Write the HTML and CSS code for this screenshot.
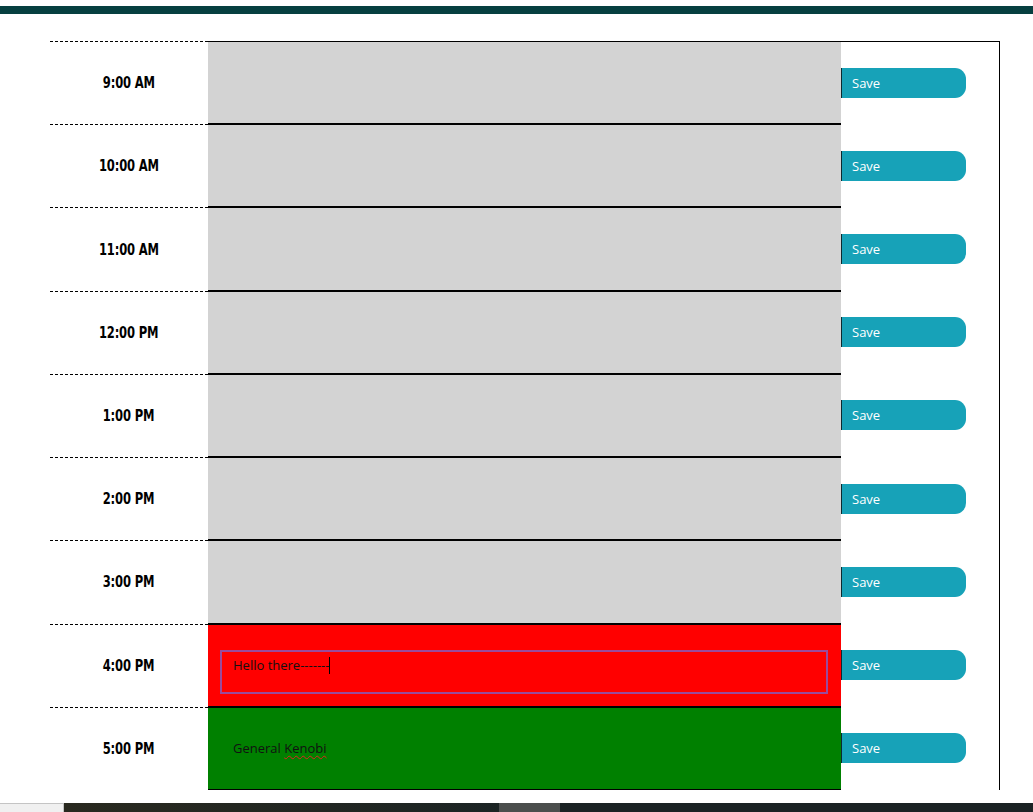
FILE: index.html
```html
<!DOCTYPE html>
<html lang="en">
<head>
<meta charset="utf-8">
<title>Work Day Scheduler</title>
<link rel="stylesheet" href="styles.css">
</head>
<body>
<div class="topbar"></div>
<main class="planner">
  <div class="time-block">
    <div class="hour"><span class="hour-label">9:00 AM</span></div>
    <div class="desc past"><div class="field"></div></div>
    <div class="save-cell"><button class="save-btn">Save</button></div>
  </div>
  <div class="time-block">
    <div class="hour"><span class="hour-label">10:00 AM</span></div>
    <div class="desc past"><div class="field"></div></div>
    <div class="save-cell"><button class="save-btn">Save</button></div>
  </div>
  <div class="time-block">
    <div class="hour"><span class="hour-label">11:00 AM</span></div>
    <div class="desc past"><div class="field"></div></div>
    <div class="save-cell"><button class="save-btn">Save</button></div>
  </div>
  <div class="time-block">
    <div class="hour"><span class="hour-label">12:00 PM</span></div>
    <div class="desc past"><div class="field"></div></div>
    <div class="save-cell"><button class="save-btn">Save</button></div>
  </div>
  <div class="time-block">
    <div class="hour"><span class="hour-label">1:00 PM</span></div>
    <div class="desc past"><div class="field"></div></div>
    <div class="save-cell"><button class="save-btn">Save</button></div>
  </div>
  <div class="time-block">
    <div class="hour"><span class="hour-label">2:00 PM</span></div>
    <div class="desc past"><div class="field"></div></div>
    <div class="save-cell"><button class="save-btn">Save</button></div>
  </div>
  <div class="time-block">
    <div class="hour"><span class="hour-label">3:00 PM</span></div>
    <div class="desc past"><div class="field"></div></div>
    <div class="save-cell"><button class="save-btn">Save</button></div>
  </div>
  <div class="time-block">
    <div class="hour"><span class="hour-label">4:00 PM</span></div>
    <div class="desc present"><div class="field focused">Hello there-------<span class="caret"></span></div></div>
    <div class="save-cell"><button class="save-btn">Save</button></div>
  </div>
  <div class="time-block">
    <div class="hour"><span class="hour-label">5:00 PM</span></div>
    <div class="desc future"><div class="field">General <span class="misspelled">Kenobi</span></div></div>
    <div class="save-cell"><button class="save-btn">Save</button></div>
  </div>
</main>
<div class="taskbar">
  <div class="tb-light"></div>
  <div class="tb-dark"></div>
  <div class="tb-gray"></div>
  <div class="tb-end"></div>
</div>
</body>
</html>
```
FILE: styles.css
```css
html, body {
  margin: 0;
  padding: 0;
  background: #ffffff;
  font-family: "Open Sans", "DejaVu Sans", sans-serif;
  overflow: hidden;
}

.topbar {
  height: 8px;
  margin-top: 6px;
  background: #063f40;
}

.planner {
  margin: 27px 0 0 50px;
  width: 950px;
  height: 749px;
  display: grid;
  grid-template-rows: repeat(9, 1fr);
}

.time-block {
  display: grid;
  grid-template-columns: 158px 633px 159px;
  min-height: 0;
}

.hour {
  border-top: 1px dashed #000;
  display: flex;
  align-items: center;
  justify-content: center;
  color: #000;
}

.hour-label {
  display: inline-block;
  font-family: "DejaVu Sans", sans-serif;
  font-weight: bold;
  font-size: 15px;
  letter-spacing: -0.2px;
  transform: scaleX(0.77);
  white-space: nowrap;
}

.desc {
  border-top: 1px solid #000;
  border-bottom: 1px solid #000;
  padding: 25px 13px 0 12px;
  box-sizing: border-box;
}

.past { background: #d3d3d3; }
.present { background: #ff0000; }
.future { background: #008000; }

.field {
  height: 44px;
  box-sizing: border-box;
  border: 2px solid transparent;
  padding: 4px 0 0 11px;
  font-size: 13px;
  line-height: 18px;
  color: #111;
  white-space: pre;
}

.field.focused {
  border-color: #9a4b9c;
}

.caret {
  display: inline-block;
  width: 0;
  height: 17px;
  border-left: 1px solid #000;
  vertical-align: -4px;
}

.misspelled {
  text-decoration: underline wavy #e02020;
  text-decoration-thickness: 1px;
  text-underline-offset: 2px;
}

.save-cell {
  border-right: 1px solid #000;
  display: flex;
  align-items: center;
}

.time-block:first-child .save-cell {
  border-top: 1px solid #000;
}

.save-btn {
  width: 125px;
  height: 30px;
  margin: 0;
  padding: 0 0 0 10px;
  border: none;
  border-left: 1px solid #0b2a30;
  border-radius: 0 11px 11px 0;
  background: #17a2b8;
  color: #ffffff;
  font-family: "Open Sans", "DejaVu Sans", sans-serif;
  font-size: 13px;
  text-align: left;
}

.taskbar {
  margin-top: 13px;
  height: 9px;
  display: flex;
}

.tb-light {
  width: 64px;
  background: #f0f0f0;
  border-top: 1px solid #c4c4c4;
  border-right: 1px solid #c4c4c4;
  box-sizing: border-box;
}

.tb-dark {
  width: 435px;
  background: linear-gradient(90deg, #29291f, #1c2424);
}

.tb-gray {
  width: 61px;
  background: #4b4e4d;
}

.tb-end {
  flex: 1;
  background: #1b2224;
}
```
